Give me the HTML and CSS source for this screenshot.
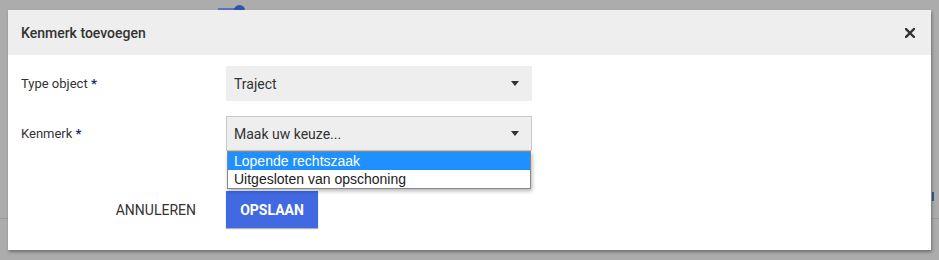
FILE: index.html
```html
<!DOCTYPE html>
<html lang="nl">
  <head>
    <meta charset="UTF-8" />
    <meta name="viewport" content="width=device-width, initial-scale=1.0" />
    <title>Kenmerk toevoegen</title>
    <link rel="stylesheet" href="styles.css">
  </head>
  <body>
    <!-- page behind the modal -->
    <div class="backdrop">
      <span class="bg-bar"></span>
      <span class="bg-knob"></span>
      <span class="bg-line"></span>
      <span class="bg-mark"></span>
    </div>

    <div class="modal">
      <div class="modal-header">
        <h3>Kenmerk toevoegen</h3>
        <button class="close" aria-label="Sluiten">
          <svg width="10" height="10" viewBox="0 0 10 10">
            <path d="M1 1 L9 9 M9 1 L1 9" stroke="#333" stroke-width="2.4" stroke-linecap="square" />
          </svg>
        </button>
      </div>

      <div class="modal-body">
        <div class="row">
          <label class="label">Type object <span class="req">*</span></label>
          <div class="select plain">
            <span>Traject</span>
            <span class="caret"></span>
          </div>
        </div>

        <div class="row">
          <label class="label">Kenmerk <span class="req">*</span></label>
          <div class="select open">
            <span>Maak uw keuze...</span>
            <span class="caret"></span>
            <ul class="options">
              <li class="active">Lopende rechtszaak</li>
              <li>Uitgesloten van opschoning</li>
            </ul>
          </div>
        </div>

        <div class="actions">
          <div class="actions-left">
            <button class="btn-cancel">ANNULEREN</button>
          </div>
          <button class="btn-save">OPSLAAN</button>
        </div>
      </div>
    </div>
  </body>
</html>
```

FILE: styles.css
```css
body {
  margin: 0;
  padding: 10px 8px;
  background: #acacac;
  font-family: Roboto, "Liberation Sans", Arial, sans-serif;
  color: #333;
  position: relative;
  height: 260px;
  box-sizing: border-box;
  overflow: hidden;
}
.backdrop {
  position: absolute;
  inset: 0;
}
.bg-bar {
  position: absolute;
  left: 218px;
  top: 8px;
  width: 26px;
  height: 2px;
  background: #5a76b8;
}
.bg-knob {
  position: absolute;
  left: 234px;
  top: 5px;
  width: 11px;
  height: 11px;
  border-radius: 50%;
  background: #2f55b3;
}
.bg-line {
  position: absolute;
  left: 0;
  right: 0;
  top: 218px;
  height: 1px;
  background: #9a9a9a;
}
.bg-mark {
  position: absolute;
  right: 5px;
  top: 192px;
  width: 2px;
  height: 9px;
  background: #2d5f8f;
}
.modal {
  position: relative;
  width: 923px;
  height: 240px;
  background: #fff;
  box-shadow: 1px 2px 3px rgba(0, 0, 0, 0.35);
}
.modal-header {
  height: 45px;
  background: #eeeeee;
  display: flex;
  align-items: center;
  justify-content: space-between;
  padding: 0 16px 0 13px;
}
.modal-header h3 {
  margin: 0;
  font-size: 14px;
  font-weight: 500;
  color: #333;
}
.close {
  border: 0;
  background: none;
  padding: 0;
  display: flex;
  cursor: pointer;
}
.modal-body {
  padding: 11px 0 0 13px;
}
.row {
  display: flex;
  align-items: center;
  margin-bottom: 15px;
}
.label {
  width: 205px;
  font-size: 13px;
  color: #333;
}
.req {
  color: #1a2a6c;
  font-weight: bold;
}
.select {
  position: relative;
  width: 306px;
  height: 35px;
  box-sizing: border-box;
  background: #eeeeee;
  display: flex;
  align-items: center;
  justify-content: space-between;
  padding: 0 13px 0 8px;
  font-size: 14px;
  color: #333;
}
.select.open {
  border: 1px solid #c8c8c8;
  padding-left: 7px;
  padding-right: 12px;
}
.caret {
  width: 0;
  height: 0;
  border-left: 4px solid transparent;
  border-right: 4px solid transparent;
  border-top: 5px solid #333;
}
.options {
  position: absolute;
  left: 0;
  right: 0;
  top: 34px;
  margin: 0;
  padding: 0;
  list-style: none;
  background: #fff;
  border: 1px solid #888;
  box-shadow: 1px 2px 4px rgba(0, 0, 0, 0.3);
  font-family: "Liberation Sans", Arial, sans-serif;
  font-size: 14px;
  z-index: 2;
}
.options li {
  height: 18px;
  line-height: 18px;
  padding-left: 6px;
  color: #222;
}
.options li.active {
  background: #1e90ff;
  color: #fff;
}
.actions {
  display: flex;
  padding-top: 25px;
}
.actions-left {
  width: 205px;
  display: flex;
  justify-content: flex-end;
}
.btn-cancel {
  border: 0;
  background: none;
  font-family: Roboto, "Liberation Sans", Arial, sans-serif;
  font-size: 14px;
  color: #333;
  padding: 0 30px 0 0;
  height: 37px;
  cursor: pointer;
}
.btn-save {
  border: 0;
  background: #4169e1;
  color: #fff;
  font-family: Roboto, "Liberation Sans", Arial, sans-serif;
  font-size: 14px;
  font-weight: bold;
  width: 92px;
  height: 37px;
  box-shadow: 0 1px 1px rgba(0, 0, 0, 0.3);
  cursor: pointer;
}
```
